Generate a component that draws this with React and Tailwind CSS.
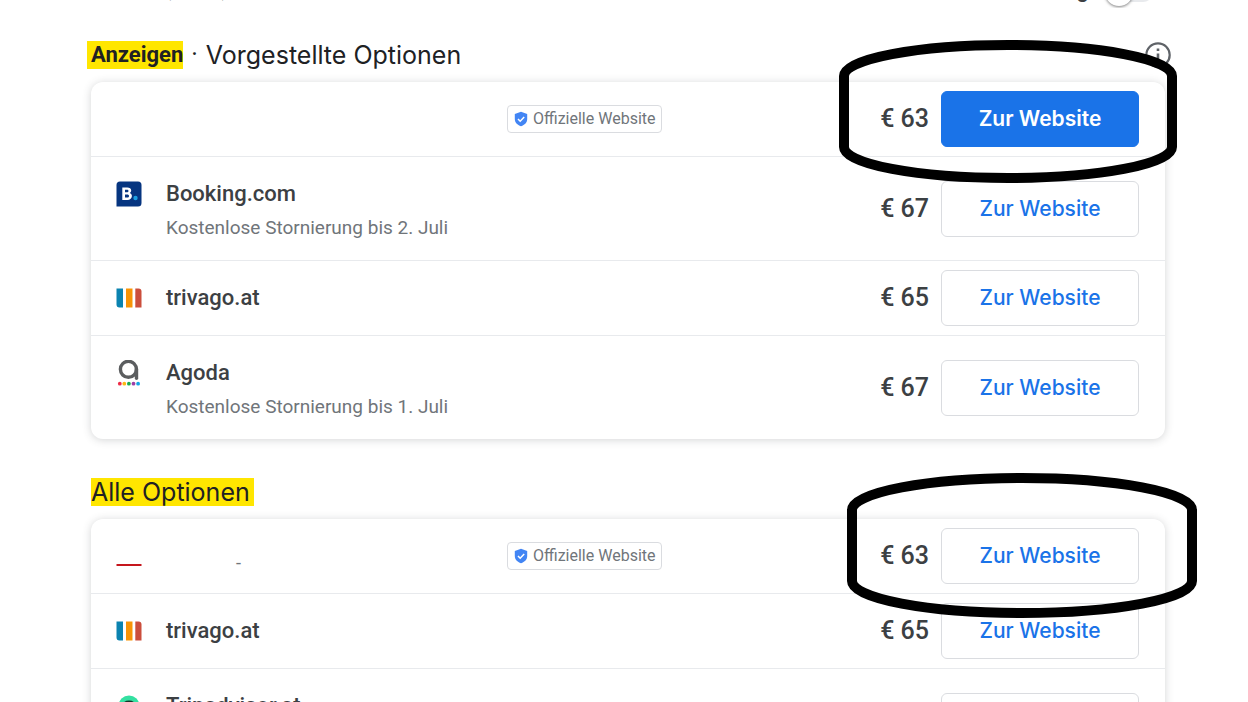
import React from "react";

const BookingLogo = () => (
  <svg viewBox="0 0 26 26" className="size-[26px]" aria-hidden="true">
    <path d="M4 0.5h18a3.5 3.5 0 0 1 3.5 3.5v18a3.5 3.5 0 0 1-3.5 3.5H0.5V4A3.5 3.5 0 0 1 4 0.5z" fill="#063580" />
    <path
      fillRule="evenodd"
      d="M6.3 6.400h4.900c2.500 0 4 1.200 4 3.200 0 1.200-.6 2-1.500 2.500 1.400.5 2.200 1.500 2.200 3 0 2.400-1.800 3.900-4.500 3.900H6.300zM9 8.800v2.500h1.900c1 0 1.600-.4 1.600-1.250S11.900 8.800 10.900 8.800zM9 13.500v3h2.200c1.200 0 1.800-.5 1.800-1.500s-.7-1.500-1.800-1.500z"
      fill="#fff"
    />
    <circle cx="19.500" cy="17" r="2.200" fill="#1ba0e2" />
  </svg>
);

const TrivagoLogo = () => (
  <svg viewBox="0 0 26 26" className="size-[26px]" aria-hidden="true">
    <path d="M0.500 3.500h6.500v19H3.500a3 3 0 0 1-3-3z" fill="#0b83b0" />
    <path d="M10 3.500h6.500v19H10z" fill="#f89406" />
    <path d="M19.300 3.500h3.200a3 3 0 0 1 3 3v16h-6.200z" fill="#cb4e3c" />
  </svg>
);

const AgodaLogo = () => (
  <svg viewBox="0 0 26 26" className="size-[26px]" aria-hidden="true">
    <circle cx="12.400" cy="9.300" r="8" fill="none" stroke="#5b5d5f" strokeWidth="3.400" />
    <path d="M20.500 9v9.300" stroke="#5b5d5f" strokeWidth="3.400" strokeLinecap="round" />
    <circle cx="3.800" cy="23.700" r="1.900" fill="#ee2b47" />
    <circle cx="8.300" cy="23.700" r="1.900" fill="#fdb813" />
    <circle cx="12.900" cy="23.700" r="1.900" fill="#1aab50" />
    <circle cx="17.500" cy="23.700" r="1.900" fill="#9c3fa5" />
    <circle cx="22.100" cy="23.700" r="1.900" fill="#14a5e5" />
  </svg>
);

const TripadvisorLogo = () => (
  <svg viewBox="0 0 26 26" className="size-[26px]" aria-hidden="true">
    <circle cx="13" cy="13" r="10.500" fill="#34e0a1" />
    <path d="M5.500 9.800h2.900C11 7.900 15 7.900 17.600 9.800h2.900" fill="none" stroke="#12382b" strokeWidth="1.600" />
    <circle cx="9.300" cy="13.500" r="3" fill="none" stroke="#12382b" strokeWidth="1.600" />
    <circle cx="16.700" cy="13.500" r="3" fill="none" stroke="#12382b" strokeWidth="1.600" />
  </svg>
);

const HotelLogo = () => (
  <svg viewBox="0 0 26 26" className="size-[26px]" aria-hidden="true">
    <path d="M0.500 22h25v2h-25z" fill="#c5161d" />
  </svg>
);

const Badge = () => (
  <span className="flex h-7 items-center gap-1 whitespace-nowrap rounded border border-[#dadce0] px-[5px] text-base text-[#70757a]">
    <svg viewBox="0 0 16 16" className="size-4" aria-hidden="true">
      <path d="M8 .8 14.200 3v5c0 3.500-2.500 6-6.200 7.300C4.300 14 1.800 11.500 1.800 8V3z" fill="#4285f4" />
      <path d="m5 8 2.200 2.200 4-4.200" fill="none" stroke="#fff" strokeWidth="1.500" />
    </svg>
    Offizielle Website
  </span>
);

const InfoIcon = () => (
  <svg viewBox="0 0 26 26" className="size-[26px]" aria-hidden="true">
    <circle cx="13" cy="13" r="11.700" fill="none" stroke="#5f6368" strokeWidth="2.200" />
    <path d="M13 6.500v2.600M13 11.500v8" stroke="#5f6368" strokeWidth="2.600" />
  </svg>
);

const FirstRing = () => (
  <svg viewBox="0 0 338 143" className="pointer-events-none absolute -right-3 -top-[42px] z-10 h-[143px] w-[338px]" aria-hidden="true">
    <path d="M5 36A164 31 0 0 1 333 36V107A164 31 0 0 1 5 107z" fill="none" stroke="#000" strokeWidth="10" />
  </svg>
);

const SecondRing = () => (
  <svg viewBox="0 0 350 145" className="pointer-events-none absolute -right-8 -top-[46px] z-10 h-[145px] w-[350px]" aria-hidden="true">
    <path d="M5 37A170 32 0 0 1 345 37V108A170 32 0 0 1 5 108z" fill="none" stroke="#000" strokeWidth="10" />
  </svg>
);

const featured = [
  { price: "€ 63", official: true, primary: true, ring: FirstRing },
  { logo: BookingLogo, name: "Booking.com", note: "Kostenlose Stornierung bis 2. Juli", price: "€ 67" },
  { logo: TrivagoLogo, name: "trivago.at", price: "€ 65" },
  { logo: AgodaLogo, name: "Agoda", note: "Kostenlose Stornierung bis 1. Juli", price: "€ 67" },
];

const all = [
  { logo: HotelLogo, dash: true, price: "€ 63", official: true, ring: SecondRing },
  { logo: TrivagoLogo, name: "trivago.at", price: "€ 65" },
  { logo: TripadvisorLogo, name: "Tripadvisor.at", note: "Kostenlose Stornierung bis 2. Juli", price: "€ 67" },
];

function Offer({ logo: Logo, name, note, dash, price, official, primary, ring: Ring }) {
  return (
    <li
      className={
        "relative flex items-center border-b border-[#e8eaed] pl-[25px] pr-[26px] last:border-b-0 " +
        (note ? "min-h-[104px] last:min-h-[103px]" : "h-[75px]")
      }
    >
      <div className={"flex w-[391px] shrink-0 gap-6 " + (note ? "pt-1" : dash ? "pt-1.5" : "")}>
        <div className="flex h-[34px] w-[26px] items-center">{Logo && <Logo />}</div>
        <div>
          {name && <h3 className="text-[22px] font-medium leading-[34px] text-[#3c4043]">{name}</h3>}
          {note && <p className="text-[19px] leading-[34px] text-[#70757a]">{note}</p>}
          {dash && <p className="pl-[70px] pt-2 text-lg leading-[34px] text-[#70757a]">-</p>}
        </div>
      </div>
      {official && <Badge />}
      <div className="ml-auto flex items-center gap-3">
        <span className="whitespace-nowrap text-[25px] font-medium text-[#3c4043]">{price}</span>
        <button
          type="button"
          className={
            "h-14 w-[198px] rounded-md border font-['Inter',sans-serif] text-[21px] " +
            (primary
              ? "border-[#1a73e8] bg-[#1a73e8] font-semibold text-white"
              : "border-[#dadce0] bg-white font-medium text-[#1a73e8]")
          }
        >
          Zur Website
        </button>
      </div>
      {Ring && <Ring />}
    </li>
  );
}

const Card = ({ offers }) => (
  <ul className="rounded-xl bg-white shadow-[0_1px_8px_rgba(60,64,67,0.22)]">
    {offers.map((offer, i) => (
      <Offer key={i} {...offer} />
    ))}
  </ul>
);

export default function App() {
  return (
    <main className="h-screen overflow-hidden bg-white pl-[91px] pr-[83px] font-['Roboto',sans-serif] text-[#202124]">
      <div className="flex h-2 items-end overflow-hidden text-[22px] leading-7 text-[#3c4043]">
        <div className="flex gap-12 pb-1 pl-[78px]">
          <span>,</span>
          <span>,</span>
        </div>
        <label htmlFor="total" className="ml-auto pb-1 pr-4 font-medium">
          g
        </label>
        <button id="total" type="button" role="switch" aria-checked="false" className="mr-3 flex h-8 w-12 shrink-0 items-center">
          <span className="flex h-5 w-full items-center rounded-full bg-[#e8eaed]">
            <span className="size-7 shrink-0 rounded-full bg-white shadow-[0_1px_3px_rgba(0,0,0,0.5)]" />
          </span>
        </button>
      </div>

      <section>
        <header className="flex h-[74px] items-center justify-between pt-[19px]">
          <h2 className="flex items-center gap-2 text-[25px] leading-7">
            <mark className="-ml-1 bg-[#ffe600] pl-1 text-[22px] font-bold text-[#202124]">Anzeigen</mark>
            <span>·</span>
            <span className="font-['Inter',sans-serif]">Vorgestellte Optionen</span>
          </h2>
          <button type="button" aria-label="Info" className="-mr-1.5">
            <InfoIcon />
          </button>
        </header>
        <Card offers={featured} />
      </section>

      <section className="pt-[39px]">
        <h2 className="mb-[13px] flex font-['Inter',sans-serif] text-[25px] leading-7">
          <mark className="bg-[#ffe600] pr-1 text-[#202124]">Alle Optionen</mark>
        </h2>
        <Card offers={all} />
      </section>
    </main>
  );
}
